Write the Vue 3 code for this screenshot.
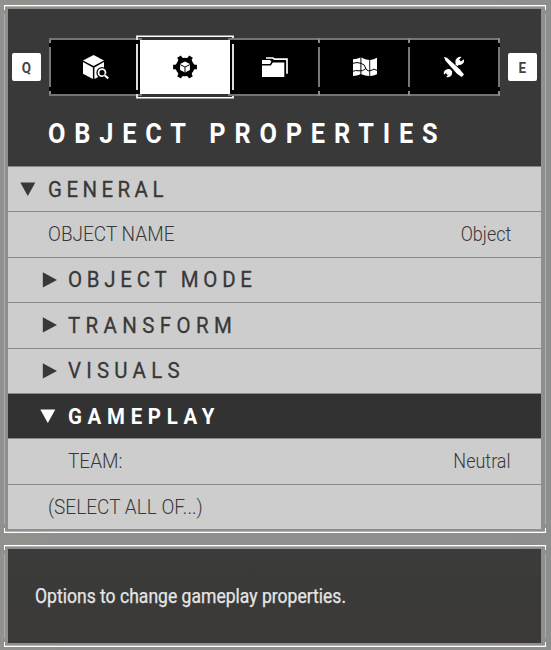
<script setup>
const tabs = ['object', 'properties', 'folder', 'map', 'tools']
const rows = [
  { label: 'GENERAL', kind: 'head', arrow: 'down', id: 'general' },
  { label: 'OBJECT NAME', kind: 'field', value: 'Object', id: 'name' },
  { label: 'OBJECT MODE', kind: 'head', arrow: 'right', nested: true, id: 'mode' },
  { label: 'TRANSFORM', kind: 'head', arrow: 'right', nested: true, id: 'transform' },
  { label: 'VISUALS', kind: 'head', arrow: 'right', nested: true, id: 'visuals' },
  { label: 'GAMEPLAY', kind: 'head', arrow: 'down', nested: true, active: true, id: 'gameplay' },
  { label: 'TEAM:', kind: 'field', value: 'Neutral', nested: true, id: 'team' },
  { label: '(SELECT ALL OF...)', kind: 'field', id: 'select' },
]
const teeth = [0, 60, 120, 180, 240, 300]
</script>

<template>
  <main class="screen">
    <section class="frame main-panel">
      <header class="header">
        <div class="nav">
          <kbd class="key"><span class="key-text">Q</span></kbd>
          <div class="tabs">
            <div v-for="t in tabs" :key="t" class="tab" :class="{ selected: t === 'properties' }">
              <svg v-if="t === 'object'" class="icon" viewBox="80 52 30 30">
                <path d="M93.6 55 104 60.5 93.6 66 83 60.5Z M83 62 92.9 67.4V79L83 73.8Z M94.4 67.4 104 62V74L94.4 79Z" fill="#fff" />
                <circle cx="102" cy="72.7" r="5.6" fill="#000" />
                <circle cx="102" cy="72.7" r="3.5" fill="none" stroke="#fff" stroke-width="1.8" />
                <path d="M104.6 75.3 108 78.6" stroke="#000" stroke-width="4" />
                <path d="M104.6 75.3 108.2 78.4" stroke="#fff" stroke-width="2.1" />
              </svg>
              <svg v-else-if="t === 'properties'" class="icon" viewBox="-15 -15 30 30">
                <circle r="9.2" fill="#000" />
                <path v-for="a in teeth" :key="a" d="M7-4.6 9.6-2.2H11.9V2.2H9.6L7 4.6Z" fill="#000" :transform="`rotate(${a})`" />
                <path d="M0-5.4 4.9-2.9V2.9L0 5.6-4.9 2.9V-2.9Z" fill="#fff" />
                <path d="M-4.8-2.4 0 .1 4.8-2.4M0 .1V5.6" fill="none" stroke="#000" stroke-width="1" />
              </svg>
              <svg v-else-if="t === 'folder'" class="icon" viewBox="260 52 30 30">
                <path d="M266 58H273L274.5 59.2H287V73.7" fill="none" stroke="#fff" stroke-width="1.7" />
                <path d="M262 60H270L271.4 61.6 270 64H262Z M262 65.6H270.8L272.8 62.5H284.3V77H262Z" fill="#fff" />
              </svg>
              <svg v-else-if="t === 'map'" class="icon" viewBox="349 52 30 30">
                <path d="M352 59.3Q356 59.3 359.4 57.6V74.3Q356 76 352 76Z M360.4 57.6Q364 60 368.3 60V76Q364 76 360.4 74.3Z M369.2 60Q372.5 59.8 376 57.8V74.2Q372.5 76 369.2 76Z" fill="#fff" />
                <path d="M352 63.3Q356 61.8 360 63.3Q364.3 64.2 365 69M352 71.3Q354.4 70 358 70.8T364.5 68.7Q367 72 370 70.5Q373 67.8 376 70.4" fill="none" stroke="#000" stroke-width="1" />
              </svg>
              <svg v-else class="icon tools" viewBox="439 52 30 30">
                <path d="M444 57 447 57.8 460 69.5 464 74.5 461.5 77 457 73.7 445.5 60.8Z" fill="#fff" />
                <path d="M446.8 74.2 450.7 70.5M456.2 65.1 460.5 61" stroke="#fff" stroke-width="3.2" />
                <path d="M461.5 57 458.8 60 460.5 62 463.8 59.2Q464.7 62.5 462 64.3 459.8 65.6 457.3 64.6L455.5 62.8Q454.9 59.4 457.5 57.7 459.3 56.5 461.5 57Z M446.2 77 448.8 74 447 72.1 444 74.8Q443 71.5 445.8 69.7 448 68.5 450.4 69.5L452 71.2Q452.8 74.6 450.2 76.4 448.4 77.6 446.2 77Z" fill="#fff" />
              </svg>
            </div>
          </div>
          <kbd class="key"><span class="key-text">E</span></kbd>
        </div>
        <h1 class="title"><span class="txt title-text">OBJECT PROPERTIES</span></h1>
      </header>
      <div class="list">
        <div v-for="r in rows" :key="r.id" class="row" :class="[r.kind, r.id, { nested: r.nested, active: r.active }]">
          <span class="marker">
            <svg v-if="r.arrow === 'down'" class="arrow" viewBox="0 0 16 16"><path d="M.3 1.4H15.3L7.8 15Z" /></svg>
            <svg v-else-if="r.arrow === 'right'" class="arrow" viewBox="0 0 16 16"><path d="M.8.3V15.5L15 7.9Z" /></svg>
          </span>
          <span class="txt label">{{ r.label }}</span>
          <span v-if="r.value" class="txt value">{{ r.value }}</span>
        </div>
      </div>
    </section>
    <section class="frame hint">
      <p class="hint-body"><span class="txt hint-text">Options to change gameplay properties.</span></p>
    </section>
  </main>
</template>

<style>
body { margin: 0; background: #8f8f8f; }
</style>

<style scoped>
.screen {
  box-sizing: border-box;
  width: 551px;
  height: 650px;
  padding: 5px 5px 0 4px;
  background: linear-gradient(90deg, #92918d, #8f8f8f 15%, #8f8f8f 85%, #8c8f8e);
  font-family: Roboto, "Liberation Sans", sans-serif;
  color: #383838;
  overflow: hidden;
}
.frame {
  --side: linear-gradient(#fff 5px, transparent 5px 9px, #adadad 9px calc(100% - 9px), transparent calc(100% - 9px) calc(100% - 5px), #fff calc(100% - 5px));
  box-sizing: border-box;
  width: 542px;
  padding: 4px 5px 4px 4px;
  background:
    linear-gradient(#fff, #fff) 0 0 / 100% 1px no-repeat,
    linear-gradient(#fff, #fff) 0 100% / 100% 1px no-repeat,
    var(--side) 0 0 / 1px 100% no-repeat,
    var(--side) 100% 0 / 1px 100% no-repeat,
    linear-gradient(#b4b4b4, #b4b4b4) 1px 1px / 540px 1px no-repeat,
    linear-gradient(#b4b4b4, #b4b4b4) 1px calc(100% - 1px) / 540px 1px no-repeat,
    #8f8f8f;
}
.main-panel { height: 528px; }
.header { height: 157px; background: #393939; overflow: hidden; }
.nav { display: flex; align-items: center; margin-top: 29px; padding-left: 4px; height: 58px; }
.key {
  display: flex;
  align-items: center;
  justify-content: center;
  box-sizing: border-box;
  width: 29px;
  height: 28px;
  padding-top: 1px;
  border-radius: 2px;
  background: #fff;
  color: #444;
  font: 700 15.5px Roboto, sans-serif;
}
.key-text { transform: scaleX(.86); }
.tabs {
  --tick: linear-gradient(#8a8a8a 5px, #000 5px 9px, #777 9px 49px, #000 49px 53px, #8a8a8a 53px);
  display: flex;
  box-sizing: border-box;
  width: 451px;
  height: 58px;
  margin: 0 8px;
  background: var(--tick) 0 0 / 2px 100% no-repeat, #000;
}
.tab {
  position: relative;
  display: flex;
  align-items: center;
  justify-content: center;
  box-sizing: border-box;
  width: 90px;
  height: 58px;
  background: var(--tick) 100% 0 / 2px 100% no-repeat,
    linear-gradient(#747474, #747474) 0 0 / 100% 2px no-repeat,
    linear-gradient(#747474, #747474) 0 100% / 100% 2px no-repeat;
}
.tab:first-child { width: 91px; }
.icon { width: 30px; height: 30px; }
.tools { margin-right: 2px; }
.selected { background: #fff; }
.selected::before {
  --edge: linear-gradient(#ddd 5px, #000 5px 9px, #ddd 9px 55px, #000 55px 59px, #ddd 59px);
  content: "";
  position: absolute;
  left: -4px;
  top: -3px;
  width: 98px;
  height: 64px;
  background:
    linear-gradient(#fff, #fff) 1px 1px / 96px 1px no-repeat,
    linear-gradient(#fff, #fff) 1px 62px / 96px 1px no-repeat,
    linear-gradient(#999, #999) 0 0 / 100% 1px no-repeat,
    linear-gradient(#999, #999) 0 100% / 100% 1px no-repeat,
    var(--edge) 0 0 / 2px 100% no-repeat,
    var(--edge) 100% 0 / 2px 100% no-repeat,
    linear-gradient(90deg, #777 4px, #333 4px 90px, #777 90px) 2px 3px / 94px 2px no-repeat,
    linear-gradient(90deg, #777 4px, #333 4px 90px, #777 90px) 2px 59px / 94px 2px no-repeat,
    linear-gradient(#fff, #fff) 4px 5px / 90px 54px no-repeat,
    linear-gradient(#333 5px, #000 5px 59px, #333 59px);
}
.selected .icon { position: relative; }
.txt { display: inline-block; white-space: pre; transform-origin: 0 50%; }
.title { margin: 20px 0 0 40px; font-size: 27.5px; line-height: 36px; font-weight: 700; color: #fff; }
.title-text { transform: scaleX(.92); letter-spacing: 9.6px; }
.list { display: grid; grid-template-rows: 45px 46px 45px 46px 45px 45px 46px 45px; background: #cdcdcd; }
.row { display: flex; align-items: center; box-sizing: border-box; border-top: 1px solid #888; padding: 0 30px 1px 12px; }
.general { padding-bottom: 0; }
.marker { flex: none; width: 28px; height: 16px; }
.nested .marker { width: 48px; }
.nested .arrow { margin-left: 20px; }
.mode .arrow, .transform .arrow, .visuals .arrow { margin-left: 22px; }
.arrow { display: block; width: 16px; height: 16px; fill: currentColor; }
.head .label { font-size: 21.5px; font-weight: 400; transform: scaleX(.95); -webkit-text-stroke: .3px currentColor; }
.general .label { letter-spacing: 4.7px; }
.mode .label { letter-spacing: 5px; }
.transform .label { letter-spacing: 5.7px; }
.visuals .label { letter-spacing: 5.5px; }
.field { font-size: 20px; font-weight: 300; }
.field .label { transform: scaleX(.95); letter-spacing: .02px; }
.value { margin-left: auto; transform-origin: 100% 50%; transform: scaleX(.9); }
.active { background: #323232; color: #fff; padding-bottom: 0; }
.active.head .label { font-weight: 700; letter-spacing: 6px; -webkit-text-stroke: 0; }
.hint { height: 102px; margin-top: 12px; }
.hint-body { display: flex; align-items: center; height: 94px; margin: 0; padding-left: 27px; background: linear-gradient(#3a3b3a, #3a3938); color: #e6e6e6; }
.hint-text { font-size: 19.5px; transform: scaleX(.9); -webkit-text-stroke: .25px currentColor; }
</style>
